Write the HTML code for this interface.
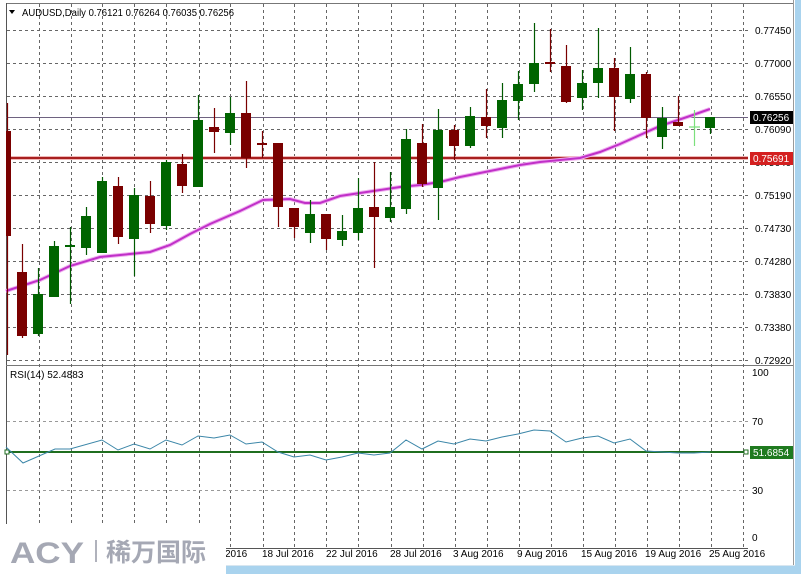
<!DOCTYPE html>
<html><head><meta charset="utf-8"><style>
html,body{margin:0;padding:0;background:#fff;width:801px;height:574px;overflow:hidden}
svg{display:block;font-family:"Liberation Sans",Tahoma,sans-serif}
</style></head><body>
<svg width="801" height="574" viewBox="0 0 801 574" xmlns="http://www.w3.org/2000/svg">
<rect width="801" height="574" fill="#fff"/>
<!-- frame -->
<rect x="795" y="0" width="6" height="574" fill="#a9d3ee"/>
<line x1="793.5" y1="0" x2="793.5" y2="566" stroke="#9a9a9a"/>
<rect x="0" y="566" width="801" height="8" fill="#a9d3ee"/>
<line x1="0" y1="565.5" x2="795" y2="565.5" stroke="#d8e6f0"/>
<line x1="6" y1="3.5" x2="793" y2="3.5" stroke="#777"/>
<line x1="6.5" y1="3" x2="6.5" y2="548" stroke="#555"/>
<line x1="6" y1="365.5" x2="793" y2="365.5" stroke="#777"/>
<line x1="6" y1="548.5" x2="748" y2="548.5" stroke="#555"/>
<!-- grid -->
<g stroke="#666" stroke-dasharray="3,3" stroke-width="1">
<path d="M39.5 4V548M71.5 4V548M102.5 4V548M134.5 4V548M166.5 4V548M199.5 4V548M230.5 4V548M263.5 4V548M294.5 4V548M326.5 4V548M358.5 4V548M391.5 4V548M423.5 4V548M455.5 4V548M487.5 4V548M519.5 4V548M551.5 4V548M583.5 4V548M615.5 4V548M647.5 4V548M679.5 4V548M711.5 4V548M743.5 4V548"/>
<path d="M7 30.5H748M7 63.5H748M7 96.5H748M7 129.5H748M7 162.5H748M7 195.5H748M7 228.5H748M7 261.5H748M7 294.5H748M7 327.5H748M7 360.5H748"/>
</g>
<g stroke="#999" stroke-dasharray="3,3"><path d="M7 421.5H748M7 490.5H748"/></g>
<!-- level lines -->
<line x1="6" y1="158" x2="748" y2="158" stroke="#f0b8b8" stroke-width="4"/>
<line x1="6" y1="158" x2="748" y2="158" stroke="#a82020" stroke-width="2"/>
<line x1="6" y1="117.5" x2="748" y2="117.5" stroke="#6e6280" stroke-width="1"/>
<!-- MA -->
<polyline fill="none" stroke="#f0b0f0" stroke-width="4" points="6,291 40,280 70,266 100,257 130,254 150,252 170,245 190,234 210,224 240,211 263,200 290,199 305,203 320,203 340,196 360,193 380,190 400,187 420,185 440,182 460,177 480,173 500,169 520,165 540,162 560,160 580,158 600,152 620,144 640,135 660,126 690,116 710,109"/>
<polyline fill="none" stroke="#c030c8" stroke-width="2" points="6,291 40,280 70,266 100,257 130,254 150,252 170,245 190,234 210,224 240,211 263,200 290,199 305,203 320,203 340,196 360,193 380,190 400,187 420,185 440,182 460,177 480,173 500,169 520,165 540,162 560,160 580,158 600,152 620,144 640,135 660,126 690,116 710,109"/>
<!-- wicks -->
<g stroke-width="1.2">
<g stroke="#7a0000"><path d="M7.5 103V355M22.5 244V338M118.5 177V244M150.5 181V233M182.5 154V193M214.5 108V153M246.5 81V168M262.5 131V158M278.5 143V227M294.5 208V238M326.5 214V250M374.5 162V268M422.5 124V187M454.5 125V160M486.5 89V138M550.5 29V72M566.5 45V103M614.5 58V131M646.5 72V138M678.5 96V126"/></g>
<g stroke="#005a00"><path d="M38.5 268V336M54.5 241V297M70.5 227V304M86.5 207V255M102.5 177V253M134.5 188V276M166.5 160V230M198.5 95V187M230.5 97V145M310.5 200V243M342.5 215V246M358.5 178V240M390.5 172V222M406.5 129V214M438.5 109V220M470.5 107V148M502.5 83V138M518.5 71V120M534.5 23V92M582.5 70V110M598.5 28V98M630.5 47V103M662.5 107V149M710.5 117V134"/></g>
<path d="M694.5 110V146M689 127H700" stroke="#7ce07c"/>
</g>
<!-- red bodies -->
<g fill="#7a0000">
<rect x="6" y="131" width="5" height="105"/>
<rect x="17" y="272" width="10" height="64"/>
<rect x="113" y="186" width="10" height="51"/>
<rect x="145" y="196" width="10" height="28"/>
<rect x="177" y="164" width="10" height="22"/>
<rect x="209" y="127" width="10" height="5"/>
<rect x="241" y="113" width="10" height="45"/>
<rect x="257" y="143" width="10" height="2"/>
<rect x="273" y="143" width="10" height="64"/>
<rect x="289" y="208" width="10" height="19"/>
<rect x="321" y="214" width="10" height="25"/>
<rect x="369" y="207" width="10" height="10"/>
<rect x="417" y="143" width="10" height="41"/>
<rect x="449" y="130" width="10" height="16"/>
<rect x="481" y="117" width="10" height="9"/>
<rect x="545" y="62" width="10" height="2"/>
<rect x="561" y="66" width="10" height="36"/>
<rect x="609" y="68" width="10" height="29"/>
<rect x="641" y="74" width="10" height="44"/>
<rect x="673" y="122" width="10" height="4"/>
</g>
<!-- green bodies -->
<g fill="#006400">
<rect x="33" y="294" width="10" height="40"/>
<rect x="49" y="246" width="10" height="51"/>
<rect x="65" y="245" width="10" height="2"/>
<rect x="81" y="216" width="10" height="32"/>
<rect x="97" y="181" width="10" height="72"/>
<rect x="129" y="195" width="10" height="44"/>
<rect x="161" y="162" width="10" height="64"/>
<rect x="193" y="120" width="10" height="67"/>
<rect x="225" y="113" width="10" height="20"/>
<rect x="305" y="214" width="10" height="19"/>
<rect x="337" y="231" width="10" height="9"/>
<rect x="353" y="208" width="10" height="25"/>
<rect x="385" y="207" width="10" height="11"/>
<rect x="401" y="139" width="10" height="70"/>
<rect x="433" y="130" width="10" height="58"/>
<rect x="465" y="116" width="10" height="30"/>
<rect x="497" y="100" width="10" height="28"/>
<rect x="513" y="84" width="10" height="17"/>
<rect x="529" y="63" width="10" height="21"/>
<rect x="577" y="83" width="10" height="15"/>
<rect x="593" y="68" width="10" height="15"/>
<rect x="625" y="74" width="10" height="25"/>
<rect x="657" y="118" width="10" height="19"/>
<rect x="705" y="117" width="10" height="11"/>
</g>
<!-- RSI -->
<line x1="6" y1="452" x2="748" y2="452" stroke="#1f6e1f" stroke-width="2"/>
<rect x="5" y="450" width="4" height="4" fill="#fff" stroke="#1f6e1f"/>
<polyline fill="none" stroke="#3b86a8" stroke-width="1" points="6,447 23,463 55,449 70,449 102,440 118,450 134,444 150,449 166,440 182,445 198,436 214,438 230,435 246,444 262,442 278,452 294,457 310,455 326,460 342,457 358,453 374,455 390,453 400,445 406,440 422,449 438,441 454,444 470,439 486,441 502,437 518,434 534,430 550,431 566,442 582,438 598,436 614,443 630,439 646,451 662,452 678,453 694,453 710,452"/>
<rect x="744" y="450" width="4" height="4" fill="#fff" stroke="#1f6e1f"/>
<!-- texts -->
<g font-size="10" fill="#000">
<path d="M9 10H15L12 14Z" fill="#000"/>
<text x="22" y="16" textLength="212" lengthAdjust="spacingAndGlyphs">AUDUSD,Daily  0.76121 0.76264 0.76035 0.76256</text>
<text x="10" y="378">RSI(14) 52.4883</text>
<text x="755" y="34">0.77450</text>
<text x="755" y="67">0.77000</text>
<text x="755" y="100">0.76550</text>
<text x="755" y="133">0.76090</text>
<text x="755" y="166">0.75640</text>
<text x="755" y="199">0.75190</text>
<text x="755" y="232">0.74730</text>
<text x="755" y="265">0.74280</text>
<text x="755" y="298">0.73830</text>
<text x="755" y="331">0.73380</text>
<text x="755" y="364">0.72920</text>
<text x="752" y="376">100</text>
<text x="752" y="425">70</text>
<text x="752" y="494">30</text>
<text x="752" y="541">0</text>
<text x="225" y="557">2016</text>
<text x="262" y="557">18 Jul 2016</text>
<text x="326" y="557">22 Jul 2016</text>
<text x="390" y="557">28 Jul 2016</text>
<text x="453" y="557">3 Aug 2016</text>
<text x="517" y="557">9 Aug 2016</text>
<text x="581" y="557">15 Aug 2016</text>
<text x="645" y="557">19 Aug 2016</text>
<text x="709" y="557">25 Aug 2016</text>
</g>
<rect x="750" y="111" width="43" height="13" fill="#000"/>
<text x="753" y="121" font-size="10" fill="#fff">0.76256</text>
<rect x="750" y="152" width="43" height="13" fill="#d42020"/>
<text x="753" y="162" font-size="10" fill="#fff">0.75691</text>
<rect x="750" y="446" width="43" height="13" fill="#1f7a1f"/>
<text x="753" y="456" font-size="10" fill="#fff">51.6854</text>
<!-- logo -->
<rect x="0" y="524" width="226" height="50" fill="#fff"/>
<text x="10" y="563" font-size="30" font-weight="bold" fill="#a5a8b4" font-family="Liberation Sans, sans-serif" textLength="74" lengthAdjust="spacingAndGlyphs">ACY</text>
<rect x="95" y="540" width="2" height="22" fill="#b0b2bc"/>
<text x="106" y="561" font-size="25" fill="#a5a8b4" font-family="Liberation Sans, Noto Sans CJK SC, sans-serif" font-weight="bold">稀万国际</text>
</svg>
</body></html>
